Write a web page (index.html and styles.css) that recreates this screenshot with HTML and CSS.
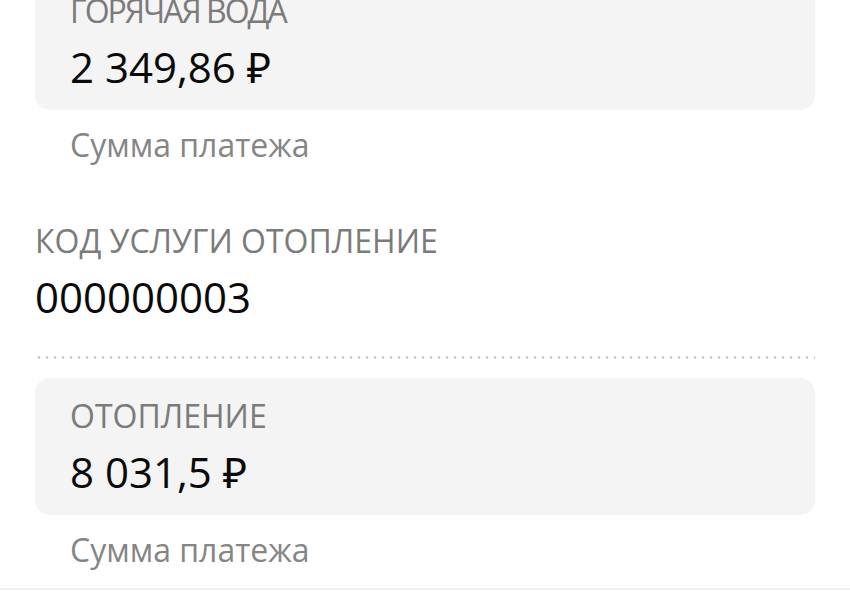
FILE: index.html
```html
<!DOCTYPE html>
<html lang="ru">
<head>
<meta charset="utf-8">
<title>Платёж</title>
<link rel="stylesheet" href="styles.css">
</head>
<body>
<main class="page">
  <section class="card card-first">
    <div class="card-label card-label-tight">Горячая вода</div>
    <div class="card-value">2 349,86 ₽</div>
  </section>
  <div class="hint">Сумма платежа</div>

  <section class="field">
    <div class="field-label">Код услуги Отопление</div>
    <div class="field-value">000000003</div>
  </section>

  <div class="dots"></div>

  <section class="card">
    <div class="card-label">Отопление</div>
    <div class="card-value">8 031,5 ₽</div>
  </section>
  <div class="hint">Сумма платежа</div>
</main>
<div class="bottom-line"></div>
</body>
</html>
```
FILE: styles.css
```css
html, body {
  margin: 0;
  padding: 0;
  background: #ffffff;
}
body {
  font-family: "Open Sans", "Noto Sans", sans-serif;
  width: 850px;
  height: 595px;
  overflow: hidden;
  position: relative;
}
.page {
  padding: 0 35px;
  display: flex;
  flex-direction: column;
}
.card {
  background: #f4f4f4;
  border-radius: 15px;
  padding: 18px 35px 17px;
}
.card-first {
  margin-top: -27px;
}
.card-label,
.field-label {
  color: #7b7b7b;
  font-size: 32px;
  line-height: 40px;
  text-transform: uppercase;
  white-space: nowrap;
}
.card-label-tight {
  letter-spacing: -2px;
}
.card-value,
.field-value {
  color: #0a0a0a;
  font-size: 42px;
  line-height: 52px;
  margin-top: 10px;
  white-space: nowrap;
}
.hint {
  color: #858585;
  font-size: 32px;
  line-height: 40px;
  padding: 15px 35px 0;
}
.field {
  padding-top: 56px;
}
.dots {
  height: 3px;
  margin-top: 33px;
  background-image: radial-gradient(circle, #c9c9c9 1px, transparent 1.6px);
  background-size: 8px 3px;
  background-repeat: repeat-x;
}
.dots + .card {
  margin-top: 19px;
}
.bottom-line {
  position: absolute;
  left: 0;
  right: 0;
  top: 588px;
  height: 2px;
  background: #efefef;
}
```
